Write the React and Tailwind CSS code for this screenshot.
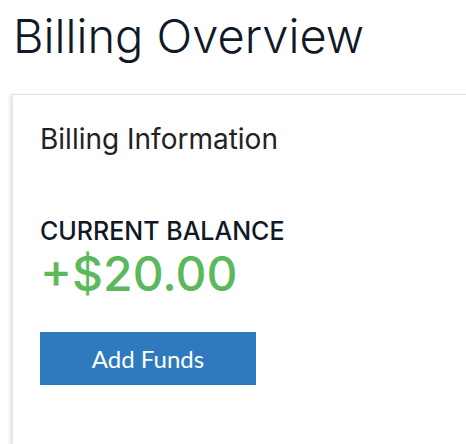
import React from 'react';

const App = () => {
  return (
    <div className="h-screen w-[466px] overflow-hidden bg-white" style={{ fontFamily: 'Inter, "Noto Sans", sans-serif' }}>
      <div className="pt-[8px] pl-[13px]">
        <h1 className="text-[47px] leading-[56px] font-light text-[#111827]">Billing Overview</h1>
      </div>

      <div className="mt-[30px] ml-[12px] w-[470px] border border-[#e3e3e3] bg-white shadow-[-2px_1px_4px_rgba(0,0,0,0.12)]">
        <div className="px-[27px] pt-[27px] pb-[60px]">
          <h2 className="text-[28px] leading-[34px] text-[#222222]">Billing Information</h2>

          <div className="mt-[60px]">
            <div className="text-[25px] leading-[30px] font-medium uppercase text-[#111827]">Current Balance</div>
            <div className="text-[48px] leading-[56px] font-medium text-[#5cb85c]">+$20.00</div>
          </div>

          <button
            className="mt-[30px] w-[216px] h-[53px] bg-[#2f7abf] text-white text-[24px]"
            style={{ fontFamily: 'Lato, sans-serif' }}
          >
            Add Funds
          </button>
        </div>
      </div>
    </div>
  );
};

export default App;
